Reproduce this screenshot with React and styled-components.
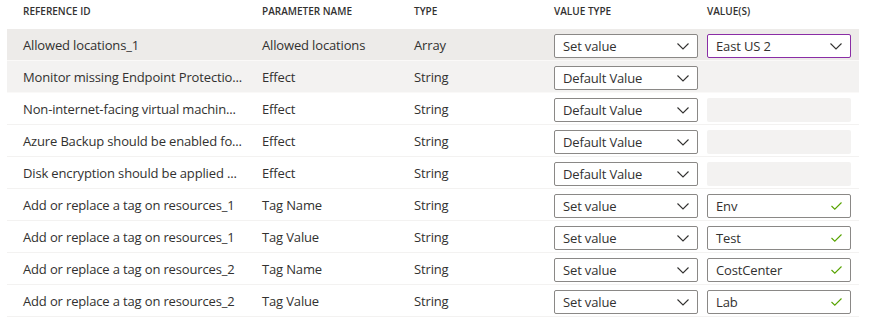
import React from 'react'
import styled, { createGlobalStyle } from 'styled-components';

const GlobalStyle = createGlobalStyle`
    body {
        margin: 0;
        background: #ffffff;
        font-family: "Open Sans", "Segoe UI", sans-serif;
        color: #323130;
    }
`;

const Table = styled.div`
    padding: 0 10px 0 7px;
    width: 852px;
`;

const columns = '247px 152px 140px 153px 160px';

const HeaderRow = styled.div`
    display: grid;
    grid-template-columns: ${columns};
    height: 29px;
`;

const HeaderCell = styled.div`
    font-size: 10px;
    font-weight: 600;
    line-height: 23px;
    text-transform: uppercase;
    padding-left: ${props => props.first ? '16px' : '8px'};
`;

const Row = styled.div`
    display: grid;
    grid-template-columns: ${columns};
    align-items: center;
    box-sizing: border-box;
    height: 32px;
    padding-top: 1px;
    background: ${props => props.bg || '#ffffff'};
    border-bottom: 1px solid ${props => props.bg ? '#faf9f8' : '#f3f2f1'};
`;

const Cell = styled.div`
    font-size: 13px;
    letter-spacing: -0.15px;
    white-space: nowrap;
    overflow: hidden;
    padding-left: ${props => props.first ? '16px' : '8px'};
    padding-right: ${props => props.first ? '0' : '8px'};
`;

const FieldCell = styled.div`
    padding-left: 8px;
    padding-top: 2px;
`;

const Dropdown = styled.div`
    display: flex;
    align-items: center;
    justify-content: space-between;
    box-sizing: border-box;
    width: 144px;
    height: 24px;
    padding: 0 8px 0 8px;
    border: 1px solid ${props => props.focused ? '#8a2da5' : '#8a8886'};
    border-radius: 2px;
    background: #ffffff;
    font-size: 13px;
    letter-spacing: -0.15px;
`;

const EmptyField = styled.div`
    width: 144px;
    height: 24px;
    border-radius: 2px;
    background: #f3f2f1;
`;

const Chevron = () => (
    <svg width="12" height="7" viewBox="0 0 12 7">
        <polyline points="0.5,0.5 6,6 11.5,0.5" fill="none" stroke="#323130" strokeWidth="1.1" />
    </svg>
);

const Check = () => (
    <svg width="11" height="8" viewBox="0 0 11 8">
        <polyline points="0.5,4 3.8,7.2 10.5,0.5" fill="none" stroke="#57a300" strokeWidth="1.1" />
    </svg>
);

const rows = [
    { ref: 'Allowed locations_1', name: 'Allowed locations', type: 'Array', valueType: 'Set value', value: { kind: 'select', text: 'East US 2' }, bg: '#edebe9' },
    { ref: 'Monitor missing Endpoint Protectio...', name: 'Effect', type: 'String', valueType: 'Default Value', value: null, bg: '#f3f2f1' },
    { ref: 'Non-internet-facing virtual machin...', name: 'Effect', type: 'String', valueType: 'Default Value', value: { kind: 'empty' } },
    { ref: 'Azure Backup should be enabled fo...', name: 'Effect', type: 'String', valueType: 'Default Value', value: { kind: 'empty' } },
    { ref: 'Disk encryption should be applied ...', name: 'Effect', type: 'String', valueType: 'Default Value', value: { kind: 'empty' } },
    { ref: 'Add or replace a tag on resources_1', name: 'Tag Name', type: 'String', valueType: 'Set value', value: { kind: 'text', text: 'Env' } },
    { ref: 'Add or replace a tag on resources_1', name: 'Tag Value', type: 'String', valueType: 'Set value', value: { kind: 'text', text: 'Test' } },
    { ref: 'Add or replace a tag on resources_2', name: 'Tag Name', type: 'String', valueType: 'Set value', value: { kind: 'text', text: 'CostCenter' } },
    { ref: 'Add or replace a tag on resources_2', name: 'Tag Value', type: 'String', valueType: 'Set value', value: { kind: 'text', text: 'Lab' } },
];

function ValueField({ value }) {
    if (!value) return null;
    if (value.kind === 'empty') return <EmptyField />;
    if (value.kind === 'select') {
        return <Dropdown focused>{value.text}<Chevron /></Dropdown>;
    }
    return <Dropdown>{value.text}<Check /></Dropdown>;
}

export default function App() {
    return (
        <>
            <GlobalStyle />
            <Table>
                <HeaderRow>
                    <HeaderCell first>Reference ID</HeaderCell>
                    <HeaderCell>Parameter name</HeaderCell>
                    <HeaderCell>Type</HeaderCell>
                    <HeaderCell>Value type</HeaderCell>
                    <HeaderCell>Value(s)</HeaderCell>
                </HeaderRow>
                {rows.map((r, i) => (
                    <Row key={i} bg={r.bg}>
                        <Cell first>{r.ref}</Cell>
                        <Cell>{r.name}</Cell>
                        <Cell>{r.type}</Cell>
                        <FieldCell>
                            <Dropdown>{r.valueType}<Chevron /></Dropdown>
                        </FieldCell>
                        <FieldCell>
                            <ValueField value={r.value} />
                        </FieldCell>
                    </Row>
                ))}
            </Table>
        </>
    );
}
